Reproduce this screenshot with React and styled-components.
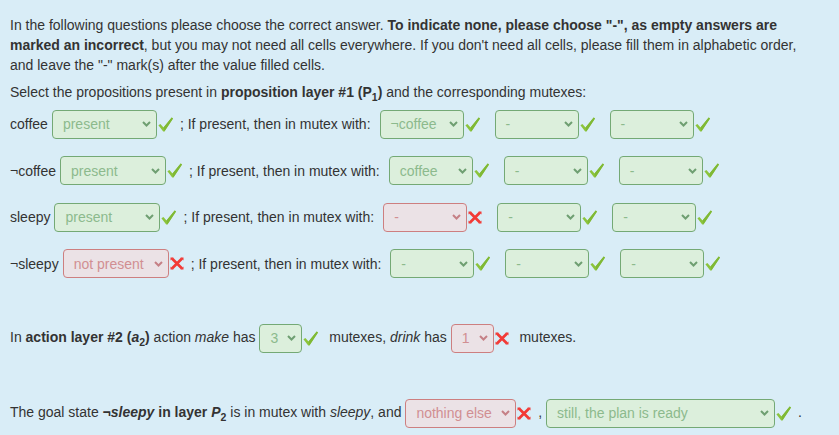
import React from 'react';
import styled, { createGlobalStyle } from 'styled-components';

const GlobalStyle = createGlobalStyle`
  html, body {
    margin: 0;
    background: #d9edf7;
  }
  body {
    font-family: "Liberation Sans", Arial, sans-serif;
    font-size: 14px;
    color: #333333;
  }
`;

const Panel = styled.div`
  padding: 15px 25px 20px 10px;
  line-height: 20px;
`;

const Intro = styled.p`
  margin: 0;
`;

const Prompt = styled.p`
  margin: 7px 0 0;
`;

const Sub = styled.sub`
  font-size: 75%;
  line-height: 0;
  vertical-align: -0.35em;
`;

const RowList = styled.div`
  display: flex;
  flex-direction: column;
  gap: 17.5px;
  margin-top: 7.5px;
`;

const Row = styled.div`
  display: flex;
  align-items: center;
  height: 29px;
  white-space: nowrap;
`;

const RowText = styled.span`
  margin-left: ${p => p.$ml || 0}px;
`;

const SelectBox = styled.span`
  display: inline-flex;
  align-items: center;
  justify-content: space-between;
  box-sizing: border-box;
  width: ${p => p.$w}px;
  height: 29px;
  margin-left: ${p => p.$ml || 0}px;
  padding: 0 5px 0 10px;
  border: 1px solid ${p => (p.$ok ? '#74a975' : '#cd7f80')};
  border-radius: 4px;
  background: ${p => (p.$ok ? '#dcefdc' : '#ebe2e6')};
  color: ${p => (p.$ok ? '#8cba8d' : '#d18f92')};
  line-height: 1;
  vertical-align: middle;
  white-space: nowrap;
`;

const Chevron = styled.svg`
  flex: none;
  width: 9px;
  height: 6px;
  margin-left: 6px;
`;

const MarkIcon = styled.svg`
  flex: none;
  display: inline-block;
  vertical-align: middle;
  margin: 0 ${p => (p.$mr === undefined ? 3 : p.$mr)}px 0 1px;
`;

const Sentence = styled.p`
  margin: 45px 0 0;
  line-height: 29px;
  white-space: nowrap;
`;

function Select({ value, ok, w, ml }) {
  const c = ok ? '#6f9f72' : '#c58086';
  return (
    <SelectBox $ok={ok} $w={w} $ml={ml}>
      <span>{value}</span>
      <Chevron viewBox="0 0 9 6">
        <polyline points="1,1 4.5,4.5 8,1" fill="none" stroke={c} strokeWidth="2" />
      </Chevron>
    </SelectBox>
  );
}

function Mark({ ok, mr }) {
  if (ok) {
    return (
      <MarkIcon $mr={mr} width="15" height="15" viewBox="0 0 15 15">
        <path d="M0.4 8.3 L2.4 6.9 L5.5 10.4 L13.7 0.5 L15 1.5 L6.4 14.6 L5.2 14.6 Z" fill="#8cc43c" />
        <path d="M5.5 10.4 L13.7 0.5 L15 1.5 L6.4 14.6 Z" fill="#7fb935" />
      </MarkIcon>
    );
  }
  return (
    <MarkIcon $mr={mr} width="14" height="13" viewBox="0 0 14 13">
      <path d="M2 1.5 L12 11.5 M12 1.5 L2 11.5" stroke="#f23a36" strokeWidth="2.7" />
      <path d="M0.5 0.5 L3.5 0.5 L0.5 3.5 Z M13.5 0.5 L10.5 0.5 L13.5 3.5 Z M0.5 12.5 L3.5 12.5 L0.5 9.5 Z M13.5 12.5 L10.5 12.5 L13.5 9.5 Z" fill="#f23a36" />
    </MarkIcon>
  );
}

const rows = [
  { label: 'coffee', value: 'present', ok: true, w: 105, mutex: [['¬coffee', true], ['-', true], ['-', true]] },
  { label: '¬coffee', value: 'present', ok: true, w: 106, mutex: [['coffee', true], ['-', true], ['-', true]] },
  { label: 'sleepy', value: 'present', ok: true, w: 106, mutex: [['-', false], ['-', true], ['-', true]] },
  { label: '¬sleepy', value: 'not present', ok: false, w: 106, mutex: [['-', true], ['-', true], ['-', true]] },
];

export default function App() {
  return (
    <Panel>
      <GlobalStyle />
      <Intro>
        In the following questions please choose the correct answer.{' '}
        <b>To indicate none, please choose "-", as empty answers are marked an incorrect</b>, but you may not
        need all cells everywhere. If you don't need all cells, please fill them in alphabetic order, and leave
        the "-" mark(s) after the value filled cells.
      </Intro>
      <Prompt>
        Select the propositions present in{' '}
        <b>
          proposition layer #1 (P<Sub>1</Sub>)
        </b>{' '}
        and the corresponding mutexes:
      </Prompt>
      <RowList>
        {rows.map(r => (
          <Row key={r.label}>
            <span>{r.label}</span>
            <Select value={r.value} ok={r.ok} w={r.w} ml={4} />
            <Mark ok={r.ok} mr={0} />
            <RowText $ml={7}>; If present, then in mutex with:</RowText>
            {r.mutex.map(([v, ok], i) => (
              <React.Fragment key={i}>
                <Select value={v} ok={ok} w={84} ml={i === 0 ? 9 : 15} />
                <Mark ok={ok} mr={0} />
              </React.Fragment>
            ))}
          </Row>
        ))}
      </RowList>
      <Sentence>
        In{' '}
        <b>
          action layer #2 (<i>a</i>
          <Sub>2</Sub>)
        </b>{' '}
        action <i>make</i> has <Select value="3" ok w={43} />
        <Mark ok />
        {'\u00a0 '}mutexes, <i>drink</i> has <Select value="1" ok={false} w={43} />
        <Mark ok={false} />
        {'\u00a0 '}mutexes.
      </Sentence>
      <Sentence>
        The goal state{' '}
        <b>
          <i>¬sleepy</i> in layer <i>P</i>
          <Sub>2</Sub>
        </b>{' '}
        is in mutex with <i>sleepy</i>, and <Select value="nothing else" ok={false} w={111} />
        <Mark ok={false} /> , <Select value="still, the plan is ready" ok w={229} />
        <Mark ok /> .
      </Sentence>
    </Panel>
  );
}
